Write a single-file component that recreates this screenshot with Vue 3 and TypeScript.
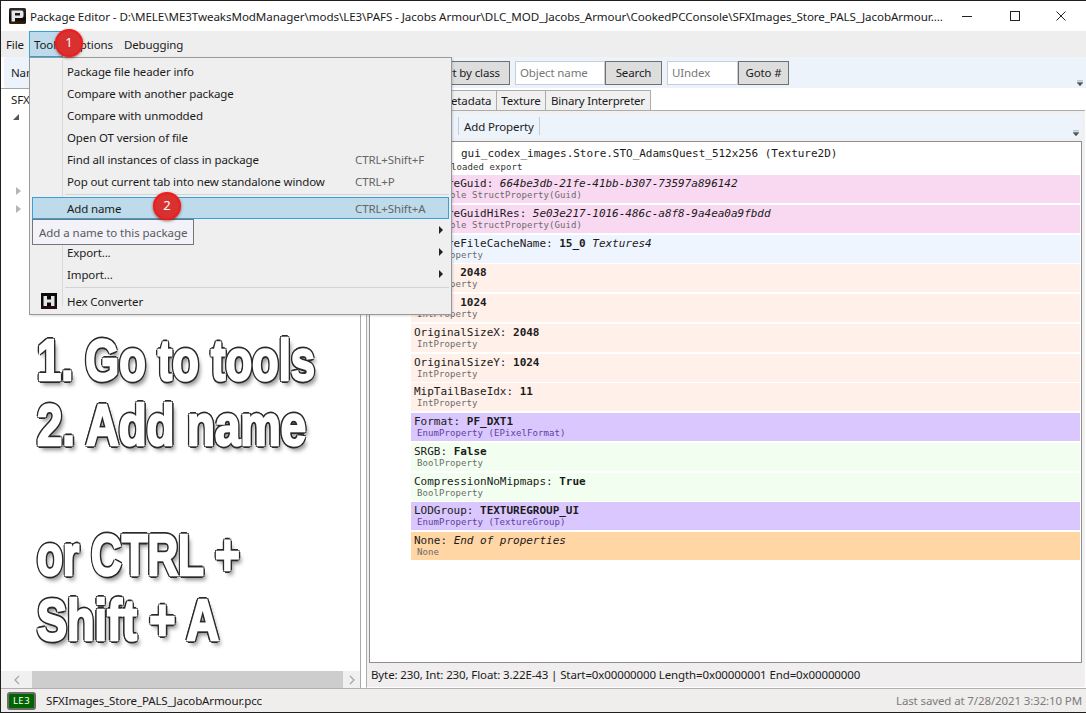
<script setup lang="ts">
interface MenuItem { label?: string; shortcut?: string; arrow?: boolean; sep?: boolean; active?: boolean; hex?: boolean }
interface Prop { name: string; value?: string; italic?: boolean; bold?: boolean; sub: string; kind: string }

const menuItems: MenuItem[] = [
  { label: 'Package file header info' },
  { label: 'Compare with another package' },
  { label: 'Compare with unmodded' },
  { label: 'Open OT version of file' },
  { label: 'Find all instances of class in package', shortcut: 'CTRL+Shift+F' },
  { label: 'Pop out current tab into new standalone window', shortcut: 'CTRL+P' },
  { sep: true },
  { label: 'Add name', shortcut: 'CTRL+Shift+A', active: true },
  { label: '', arrow: true },
  { label: 'Export...', arrow: true },
  { label: 'Import...', arrow: true },
  { sep: true },
  { label: 'Hex Converter', hex: true },
]

const props: Prop[] = [
  { name: 'TextureGuid:', value: '664be3db-21fe-41bb-b307-73597a896142', italic: true, sub: 'Immutable StructProperty(Guid)', kind: 'pink' },
  { name: 'TextureGuidHiRes:', value: '5e03e217-1016-486c-a8f8-9a4ea0a9fbdd', italic: true, sub: 'Immutable StructProperty(Guid)', kind: 'pink' },
  { name: 'TextureFileCacheName:', value: '15_0', bold: true, sub: 'NameProperty', kind: 'blue' },
  { name: 'SizeX:', value: '2048', bold: true, sub: 'IntProperty', kind: 'peach' },
  { name: 'SizeY:', value: '1024', bold: true, sub: 'IntProperty', kind: 'peach' },
  { name: 'OriginalSizeX:', value: '2048', bold: true, sub: 'IntProperty', kind: 'peach' },
  { name: 'OriginalSizeY:', value: '1024', bold: true, sub: 'IntProperty', kind: 'peach' },
  { name: 'MipTailBaseIdx:', value: '11', bold: true, sub: 'IntProperty', kind: 'peach' },
  { name: 'Format:', value: 'PF_DXT1', bold: true, sub: 'EnumProperty (EPixelFormat)', kind: 'violet' },
  { name: 'SRGB:', value: 'False', bold: true, sub: 'BoolProperty', kind: 'green' },
  { name: 'CompressionNoMipmaps:', value: 'True', bold: true, sub: 'BoolProperty', kind: 'green' },
  { name: 'LODGroup:', value: 'TEXTUREGROUP_UI', bold: true, sub: 'EnumProperty (TextureGroup)', kind: 'violet' },
  { name: 'None:', value: 'End of properties', italic: true, sub: 'None', kind: 'orange' },
]

const notes = ['1. Go to tools', '2. Add name', '\u00a0', 'or CTRL +', 'Shift + A']
const title = 'Package Editor - D:\\MELE\\ME3TweaksModManager\\mods\\LE3\\PAFS - Jacobs Armour\\DLC_MOD_Jacobs_Armour\\CookedPCConsole\\SFXImages_Store_PALS_JacobArmour....'
</script>

<template>
  <div class="window">
    <header class="titlebar">
      <svg class="logo" width="17" height="16" viewBox="0 0 17 16">
        <defs>
          <linearGradient id="logoBg" x1="0" y1="0" x2="0" y2="1">
            <stop offset="0" stop-color="#2b2b2b" />
            <stop offset=".7" stop-color="#0c0c0c" />
            <stop offset="1" stop-color="#3a2208" />
          </linearGradient>
        </defs>
        <rect width="17" height="16" rx="1.500" fill="url(#logoBg)" />
        <path d="M2.500 2.500h10a2 2 0 0 1 2 2v3.500a2 2 0 0 1-2 2H6v3.500H2.500zM6 5v2.500h5V5z" fill="#e6e6e6" fill-rule="evenodd" />
      </svg>
      <span class="title-text">{{ title }}</span>
      <div class="controls">
        <svg width="12" height="12" viewBox="0 0 12 12"><path d="M1 6.500h10" stroke="#222" /></svg>
        <svg width="12" height="12" viewBox="0 0 12 12"><rect x="1.500" y="1.500" width="9" height="9" fill="none" stroke="#222" /></svg>
        <svg width="12" height="12" viewBox="0 0 12 12"><path d="M1.500 1.500l9 9M10.500 1.500l-9 9" stroke="#222" /></svg>
      </div>
    </header>

    <nav class="menubar">
      <span class="mi">File</span>
      <span class="mi open">Tools</span>
      <span class="mi">Options</span>
      <span class="mi">Debugging</span>
    </nav>

    <div class="toolbar">
      <span class="tb-label">Name</span>
      <button class="btn sort">Sort by class</button>
      <div class="field name-field">Object name</div>
      <button class="btn search">Search</button>
      <div class="field idx-field">UIndex</div>
      <button class="btn goto">Goto #</button>
      <span class="overflow">
        <svg width="6" height="6" viewBox="0 0 7 7"><path d="M0 1h7M0 3h7L3.500 7z" fill="#555" stroke="#555" stroke-width=".5" /></svg>
      </span>
    </div>

    <main class="main">
      <section class="left">
        <div class="tree-area">
          <div class="tree">
            <div class="tree-row root">SFXImages_Store_PALS_JacobArmour.pcc</div>
            <div class="tree-row"><i class="tri down"></i></div>
            <div class="tree-row"></div>
            <div class="tree-row"></div>
            <div class="tree-row"></div>
            <div class="tree-row lower"><i class="tri right"></i></div>
            <div class="tree-row"><i class="tri right"></i></div>
          </div>
          <div class="notes">
            <div v-for="(n, i) in notes" :key="i" class="note">{{ n }}</div>
          </div>
        </div>
        <div class="hscroll">
          <span class="sb-arrow">
            <svg width="8" height="10" viewBox="0 0 8 10"><path d="M6 1L2 5l4 4" fill="none" stroke="#a6a6a6" stroke-width="1.300" /></svg>
          </span>
          <div class="sb-thumb"></div>
          <span class="sb-arrow">
            <svg width="8" height="10" viewBox="0 0 8 10"><path d="M2 1l4 4-4 4" fill="none" stroke="#a6a6a6" stroke-width="1.300" /></svg>
          </span>
        </div>
      </section>

      <section class="right">
        <div class="tabs">
          <span class="tab t-meta">Metadata</span>
          <span class="tab t-tex">Texture</span>
          <span class="tab t-bin">Binary Interpreter</span>
        </div>
        <div class="panel">
          <div class="inner-bar">
            <span class="bar-sep"></span>
            <span class="bar-btn">Add Property</span>
            <span class="bar-sep"></span>
            <span class="overflow inner">
              <svg width="6" height="6" viewBox="0 0 7 7"><path d="M0 1h7M0 3h7L3.500 7z" fill="#555" stroke="#555" stroke-width=".5" /></svg>
            </span>
          </div>
          <div class="props">
            <div class="head">
              <div class="head-name">gui_codex_images.Store.STO_AdamsQuest_512x256 (Texture2D)</div>
              <div class="head-sub">Currently loaded export</div>
            </div>
            <div v-for="p in props" :key="p.name" class="prop" :class="p.kind">
              <div class="prop-line">
                {{ p.name }}
                <span :class="{ it: p.italic, bd: p.bold }">{{ p.value }}</span>
                <span v-if="p.name === 'TextureFileCacheName:'" class="it"> Textures4</span>
              </div>
              <div class="prop-sub">{{ p.sub }}</div>
            </div>
          </div>
          <div class="hexline">Byte: 230, Int: 230, Float: 3.22E-43 | Start=0x00000000 Length=0x00000001 End=0x00000000</div>
        </div>
      </section>
    </main>

    <footer class="status">
      <span class="badge">LE3</span>
      <span class="file">SFXImages_Store_PALS_JacobArmour.pcc</span>
      <span class="saved">Last saved at 7/28/2021 3:32:10 PM</span>
    </footer>

    <div class="menu">
      <template v-for="(m, i) in menuItems" :key="i">
        <div v-if="m.sep" class="menu-sep"></div>
        <div v-else class="menu-item" :class="{ active: m.active, hexrow: m.hex }">
          <span class="menu-icon">
            <svg v-if="m.hex" width="16" height="16" viewBox="0 0 16 16">
              <rect width="16" height="16" fill="#0a0a0a" />
              <rect y="13" width="16" height="3" fill="#2a0a14" />
              <path d="M2.500 3h3.500v3.500h4V3h3.500v10H10V9.500H6V13H2.500z" fill="#e4e4e4" />
            </svg>
          </span>
          <span class="menu-label">{{ m.label }}</span>
          <span v-if="m.shortcut" class="menu-short">{{ m.shortcut }}</span>
          <i v-if="m.arrow" class="menu-arrow"></i>
        </div>
      </template>
    </div>

    <div class="tooltip">Add a name to this package</div>
    <span class="pin pin1">1</span>
    <span class="pin pin2">2</span>
  </div>
</template>

<style>
html, body { margin: 0; background: #fff; }
</style>

<style scoped>
.window {
  position: relative;
  box-sizing: border-box;
  width: 1086px;
  height: 713px;
  display: flex;
  flex-direction: column;
  border: 1px solid #1f1f1f;
  border-right: 0;
  background: #fff;
  overflow: hidden;
  font-family: "Noto Sans", "Open Sans", sans-serif;
  font-size: 11.5px;
  letter-spacing: -0.12px;
  color: #1b1b1b;
}
.titlebar {
  height: 30px;
  flex: none;
  display: flex;
  align-items: center;
  padding-left: 8px;
  background: #fff;
}
.logo { flex: none; margin-right: 4px; }
.title-text { flex: none; width: 913px; white-space: nowrap; overflow: hidden; font-size: 11.6px; letter-spacing: -0.08px; }
.controls { margin-left: 18px; display: flex; gap: 34px; align-items: center; }
.controls svg { flex: none; }
.controls svg:nth-child(1) { margin-right: 2px; }

.menubar {
  height: 26px;
  flex: none;
  display: flex;
  align-items: stretch;
  background: #eee;
}
.mi { display: flex; align-items: center; padding: 0 5px; }
.mi:first-child { width: 18px; }
.mi.open { box-sizing: border-box; width: 34px; padding-left: 4px; background: #bddbea; border: 1px solid #3a9fd6; }
.mi:nth-child(3) { margin-left: 3px; }
.mi:nth-child(4) { margin-left: 1px; }

.toolbar {
  height: 31px;
  flex: none;
  margin-left: 3px;
  display: flex;
  align-items: center;
  position: relative;
  background: #ecf3fb;
  border-radius: 3px 0 0 3px;
}
.tb-label { margin-left: 7px; width: 60px; }
.btn {
  box-sizing: border-box;
  height: 24px;
  padding: 0;
  font: inherit;
  letter-spacing: inherit;
  color: inherit;
  background: #ddd;
  border: 1px solid #707070;
}
.sort { width: 100px; margin-left: 339px; text-align: right; padding-right: 9px; }
.field {
  box-sizing: border-box;
  height: 24px;
  display: flex;
  align-items: center;
  padding-left: 4px;
  background: #fff;
  border: 1px solid #c6ced8;
  color: #777;
}
.name-field { width: 90px; margin-left: 5px; }
.search { width: 57px; }
.idx-field { width: 71px; margin-left: 5px; }
.goto { width: 51px; }
.overflow { position: absolute; right: 3px; bottom: 2px; display: flex; }

.main { flex: 1; min-height: 0; display: flex; }
.left {
  box-sizing: border-box;
  width: 360px;
  flex: none;
  display: flex;
  flex-direction: column;
  border-top: 1px solid #a8a8a8;
  border-right: 1px solid #a8a8a8;
}
.tree-area { flex: 1; min-height: 0; background: #fff; overflow: hidden; }
.tree { padding-top: 1px; }
.tree-row { height: 18px; display: flex; align-items: center; padding-left: 10px; white-space: nowrap; }
.tree-row.lower { margin-top: 2px; }
.tri { display: block; width: 0; height: 0; }
.tri.down { margin-left: 2px; border-style: solid; border-width: 0 0 6px 6px; border-color: transparent transparent #555 transparent; }
.tri.right { margin-left: 5px; border-style: solid; border-width: 4px 0 4px 5px; border-color: transparent transparent transparent #b5b5b5; }
.notes { margin-top: 109px; padding-left: 36px; }
.note {
  height: 65px;
  line-height: 65px;
  white-space: nowrap;
  transform: scaleX(.73);
  transform-origin: left center;
  font-family: "Liberation Sans", sans-serif;
  font-weight: 700;
  font-size: 58px;
  letter-spacing: 0;
  color: #fff;
  -webkit-text-stroke: 2.4px #fff;
  text-shadow:
    -2.200px -2.200px 0 #2a2a2a, 2.200px -2.200px 0 #2a2a2a, -2.200px 2.200px 0 #2a2a2a, 2.200px 2.200px 0 #2a2a2a,
    -3px 0 0 #2a2a2a, 3px 0 0 #2a2a2a, 0 -3px 0 #2a2a2a, 0 3px 0 #2a2a2a,
    4px 5px 5px rgba(0, 0, 0, .45);
}
.note:nth-child(1) { transform: scaleX(.75); }
.note:nth-child(2) { transform: scaleX(.785); }
.note:nth-child(5) { transform: scaleX(.775); }
.hscroll { height: 17px; flex: none; display: flex; align-items: stretch; background: #f0f0f0; }
.sb-arrow { width: 17px; flex: none; display: flex; align-items: center; justify-content: center; }
.sb-arrow:first-child { width: 31px; }
.sb-thumb { flex: 1; background: #cdcdcd; }

.right { flex: 1; min-width: 0; display: flex; flex-direction: column; margin-left: 5px; margin-right: 1px; }
.tabs { height: 22px; flex: none; display: flex; align-items: flex-end; padding-left: 69px; }
.tab {
  box-sizing: border-box;
  height: 20px;
  display: flex;
  align-items: center;
  justify-content: center;
  background: #f0f0f0;
  border: 1px solid #acacac;
  border-bottom: 0;
  margin-left: -1px;
}
.t-meta { width: 62px; margin-left: 0; }
.t-tex { width: 50px; }
.t-bin { width: 106px; letter-spacing: -0.2px; }
.panel {
  flex: 1;
  min-height: 0;
  box-sizing: border-box;
  display: flex;
  flex-direction: column;
  border: 1px solid #acacac;
  border-bottom-color: #fff;
  border-right: 0;
  padding: 3px 3px 0 1px;
  background: #f0f0f0;
}
.inner-bar {
  height: 24px;
  flex: none;
  position: relative;
  display: flex;
  align-items: center;
  padding-left: 89px;
  background: #ecf3fb;
  border-radius: 4px;
  margin-left: 1px;
}
.bar-sep { width: 1px; height: 18px; background: #c8ccd2; }
.bar-btn { padding: 0 5px; }
.props {
  flex: 1;
  min-height: 0;
  box-sizing: border-box;
  margin-top: 3px;
  margin-left: 1px;
  background: #fff;
  border: 1px solid #8f8f8f;
  padding-top: 4px;
  font-family: "DejaVu Sans Mono", "Liberation Mono", monospace;
  font-size: 11px;
  letter-spacing: -0.02px;
}
.head { height: 29px; padding-left: 91px; }
.head-name { height: 15px; line-height: 15px; }
.head-sub { height: 12px; line-height: 12px; margin-left: -65px; font-size: 9px; letter-spacing: .08px; color: #333; }
.prop {
  box-sizing: border-box;
  height: 28px;
  margin: 0 1px 1.75px 41px;
  padding: 1px 0 0 3px;
}
.prop-line { height: 13px; line-height: 15px; white-space: normal; }
.prop-sub { height: 12px; line-height: 12px; margin-left: 3px; font-size: 9px; letter-spacing: .08px; color: #6b6b6b; }
.it { font-style: italic; }
.bd { font-weight: 700; }
.pink { background: #f9d9f2; }
.blue { background: #eff5fe; }
.peach { background: #fff0ea; }
.violet { background: #dac7fe; }
.violet .prop-sub { color: #5a3fa0; }
.green { background: #f2fff0; }
.orange { background: #ffd6a4; }
.hexline { box-sizing: border-box; height: 24px; flex: none; display: flex; align-items: center; padding: 0 0 2px 3px; background: #f0eeee; }

.status {
  box-sizing: border-box;
  height: 24px;
  flex: none;
  display: flex;
  align-items: center;
  padding: 0 4px 0 6px;
  background: #f0eded;
  border-top: 1px solid #b0b0b0;
}
.badge {
  box-sizing: border-box;
  width: 29px;
  height: 18px;
  display: flex;
  align-items: center;
  justify-content: center;
  border: 2px solid #6c6c6c;
  border-radius: 3px;
  background: #006400;
  color: #fff;
  font-size: 9.5px;
  letter-spacing: .5px;
}
.file { margin-left: 10px; }
.saved { margin-left: auto; color: #7c7c7c; }

.menu {
  position: absolute;
  left: 28px;
  top: 56px;
  box-sizing: border-box;
  width: 423px;
  height: 258px;
  padding: 2px 2px;
  background: #efefef;
  border: 1px solid #999;
  z-index: 3;
  box-shadow: 1px 1px 2px rgba(0, 0, 0, .15);
}
.menu::before { content: ""; position: absolute; left: 32px; top: 2px; bottom: 8px; width: 1px; background: #d9d9d9; }
.menu-item { height: 22px; display: flex; align-items: center; position: relative; box-sizing: border-box; }
.menu-item.active { background: #bddbea; border: 1px solid #3a9fd6; }
.menu-item.hexrow { margin-top: 1px; }
.menu-icon { width: 35px; flex: none; display: flex; justify-content: center; padding-right: 1px; box-sizing: border-box; }
.active .menu-icon { width: 34px; }
.menu-label { white-space: nowrap; }
.menu-short { position: absolute; left: 323px; color: #666; }
.active .menu-short { left: 322px; }
.menu-arrow { position: absolute; right: 6px; width: 0; height: 0; border-style: solid; border-width: 4px 0 4px 4px; border-color: transparent transparent transparent #222; }
.menu-sep { height: 1px; margin: 2px 0 2px 33px; background: #d4d4d4; }

.tooltip {
  position: absolute;
  left: 31px;
  top: 218px;
  box-sizing: border-box;
  width: 162px;
  height: 26px;
  display: flex;
  align-items: center;
  padding-left: 6px;
  background: #f2f2f8;
  border: 1px solid #767676;
  color: #5a5a5a;
  letter-spacing: -0.05px;
  z-index: 4;
}
.pin {
  position: absolute;
  width: 28px;
  height: 28px;
  border-radius: 50%;
  display: flex;
  align-items: center;
  justify-content: center;
  padding-bottom: 2px;
  box-sizing: border-box;
  background: #d93030;
  border: 2px solid #f01c1c;
  box-shadow: 0 1px 3px rgba(90, 0, 0, .6);
  color: #fff;
  font-size: 13px;
  z-index: 5;
}
.pin1 { left: 54px; top: 28px; }
.pin2 { left: 152px; top: 191px; }
</style>
